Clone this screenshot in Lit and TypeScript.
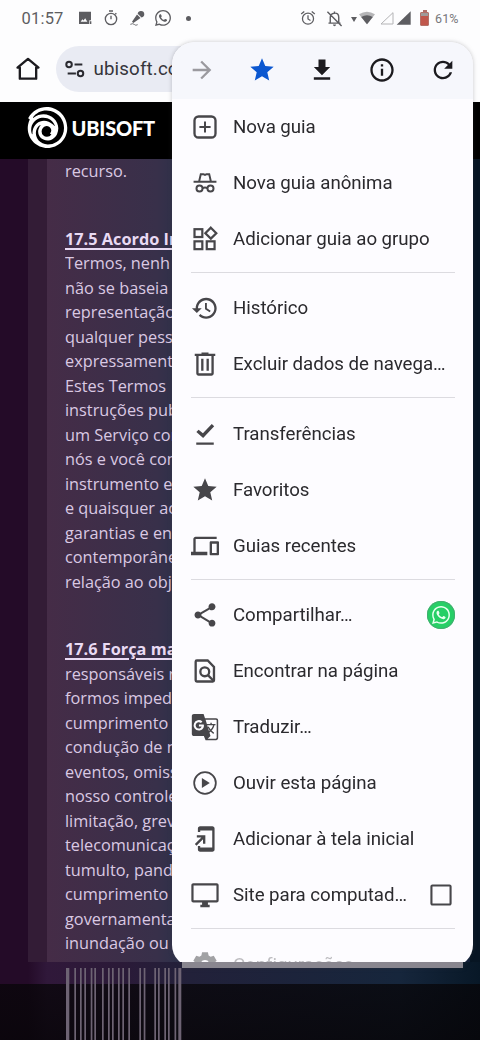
import { LitElement, html, svg, css, nothing } from "lit";
import { customElement, property } from "lit/decorators.js";

const WHATSAPP =
  "M.057 24l1.687-6.163c-1.041-1.804-1.588-3.849-1.587-5.946.003-6.556 5.338-11.891 11.893-11.891 3.181.001 6.167 1.24 8.413 3.488 2.245 2.248 3.481 5.236 3.48 8.414-.003 6.557-5.338 11.892-11.893 11.892-1.99-.001-3.951-.5-5.688-1.448l-6.305 1.654zm6.597-3.807c1.676.995 3.276 1.591 5.392 1.592 5.448 0 9.886-4.434 9.889-9.885.002-5.462-4.415-9.89-9.881-9.892-5.452 0-9.887 4.434-9.889 9.884-.001 2.225.651 3.891 1.746 5.634l-.999 3.648 3.742-.981zm11.387-5.464c-.074-.124-.272-.198-.57-.347-.297-.149-1.758-.868-2.031-.967-.272-.099-.47-.149-.669.149-.198.297-.768.967-.941 1.165-.173.198-.347.223-.644.074-.297-.149-1.255-.462-2.39-1.475-.883-.788-1.48-1.761-1.653-2.059-.173-.297-.018-.458.13-.606.134-.133.297-.347.446-.521.151-.172.2-.296.3-.495.099-.198.05-.372-.025-.521-.075-.148-.669-1.611-.916-2.206-.242-.579-.487-.501-.669-.51l-.57-.01c-.198 0-.52.074-.792.372s-1.04 1.016-1.04 2.479 1.065 2.876 1.213 3.074c.149.198 2.095 3.2 5.076 4.487.709.306 1.263.489 1.694.626.712.226 1.36.194 1.872.118.571-.085 1.758-.719 2.006-1.413.248-.695.248-1.29.173-1.414z";
const STAR = "M12 17.27L18.18 21l-1.64-7.03L22 9.24l-7.19-.61L12 2 9.19 8.63 2 9.24l5.46 4.73L5.82 21z";

const ICONS: Record<string, unknown> = {
  forward: svg`<path d="M12 4l-1.41 1.41L16.17 11H4v2h12.17l-5.58 5.59L12 20l8-8z"/>`,
  star: svg`<path d=${STAR} />`,
  download: svg`<path d="M19 9.5h-4V3H9v6.500H5l7 7 7-7zM5 18.300v2h14v-2H5z"/>`,
  info: svg`<path d="M11 7h2v2h-2zm0 4h2v6h-2zm1-9C6.480 2 2 6.480 2 12s4.480 10 10 10 10-4.480 10-10S17.520 2 12 2zm0 18c-4.410 0-8-3.590-8-8s3.590-8 8-8 8 3.590 8 8-3.590 8-8 8z"/>`,
  refresh: svg`<path d="M17.650 6.350C16.200 4.900 14.210 4 12 4c-4.420 0-7.990 3.580-7.990 8s3.570 8 7.990 8c3.730 0 6.840-2.550 7.730-6h-2.080c-.82 2.330-3.040 4-5.650 4-3.310 0-6-2.690-6-6s2.690-6 6-6c1.660 0 3.140.69 4.220 1.780L13 11h7V4l-2.350 2.350z"/>`,
  newTab: svg`<g fill="none" stroke="currentColor" stroke-width="2"><rect x="3" y="3" width="18" height="18" rx="3.500"/><path d="M12 7.200v9.600M7.200 12h9.600" stroke-width="1.700"/></g>`,
  incognito: svg`<g fill="none" stroke="currentColor" stroke-width="1.700"><path d="M2.200 10.900h19.600M7 10.500l1.400-6.100h2.200l1.400.7 1.400-.7h2.200L17 10.500"/><circle cx="7.300" cy="16.700" r="2.600"/><circle cx="16.700" cy="16.700" r="2.600"/><path d="M9.900 16.500q2.100-1.300 4.200 0"/></g>`,
  group: svg`<g fill="none" stroke="currentColor" stroke-width="1.900"><rect x="3" y="3.600" width="6.700" height="6.700"/><rect x="3" y="14" width="6.700" height="6.700"/><rect x="13.500" y="14" width="6.700" height="6.700"/><path d="M17 2.300l4.700 4.700-4.700 4.700L12.300 7z"/></g>`,
  history: svg`<path d="M13 3c-4.970 0-9 4.030-9 9H.8l4.200 4 4.200-4H6c0-3.870 3.130-7 7-7s7 3.130 7 7-3.130 7-7 7c-1.930 0-3.680-.79-4.940-2.060l-1.420 1.420C8.270 19.990 10.510 21 13 21c4.970 0 9-4.030 9-9s-4.030-9-9-9zm-1 4.500v5.200l4 2.700.9-1.300-3.300-2.200V7.500H12z" transform="translate(0 .3)"/>`,
  trash: svg`<path d="M9 2.200v1H3.200v2h1.300V20c0 1.100.9 2 2 2h11c1.100 0 2-.9 2-2V5.200h1.300v-2H15v-1H9zM6.500 5.200h11V20h-11V5.200zM8.700 7.500v10.200h2V7.500h-2zm4.600 0v10.200h2V7.500h-2z"/>`,
  done: svg`<path d="M4.500 19.300h15v1.900h-15zM19.900 5.300l-2.100-1.900-7.600 8-3.700-3.100-1.900 2 5.800 5.100z"/>`,
  devices: svg`<path d="M4 6h18V4H4c-1.100 0-2 .9-2 2v11H0v3h14v-3H4V6zm19 2h-6c-.55 0-1 .45-1 1v10c0 .55.45 1 1 1h6c.55 0 1-.45 1-1V9c0-.55-.45-1-1-1zm-1 10h-4v-8h4v8z"/>`,
  share: svg`<path d="M18 16.080c-.76 0-1.440.3-1.960.77L8.910 12.700c.05-.23.09-.46.09-.7s-.04-.47-.09-.7l7.050-4.110c.54.5 1.250.81 2.040.81 1.660 0 3-1.340 3-3s-1.340-3-3-3-3 1.340-3 3c0 .24.04.47.09.7L8.040 9.810C7.500 9.310 6.790 9 6 9c-1.660 0-3 1.340-3 3s1.340 3 3 3c.79 0 1.500-.31 2.040-.81l7.120 4.160c-.05.21-.08.43-.08.65 0 1.610 1.310 2.920 2.920 2.920s2.920-1.310 2.920-2.920-1.310-2.920-2.920-2.920z"/>`,
  find: svg`<g fill="none" stroke="currentColor" stroke-width="2"><path d="M5 3h9.300L19.700 8.500V20a1 1 0 0 1-1 1H5a1 1 0 0 1-1-1V4a1 1 0 0 1 1-1z"/><circle cx="11.800" cy="12.700" r="3.800"/><path d="M14.500 15.500l4.800 4.900"/></g>`,
  translate: svg`<path d="M2.500.8h8.300l1.200 3.700h9.500c1 0 1.800.8 1.800 1.800v15.200c0 1-.8 1.800-1.800 1.800h-9l-1.500-3.500H2.500c-1 0-1.800-.8-1.800-1.800V2.600c0-1 .8-1.800 1.800-1.800z"/><path d="M12.500 5.800h8.800q.7 0 .7.700v14.800q0 .7-.7.700h-7l2.400-2.300-4.200-13.900z" fill="#fdfcff"/><path d="M10.900 9.800H6.800v1.700h2.300c-.3 1.100-1.200 1.800-2.400 1.800a2.700 2.700 0 1 1 1.800-4.700l1.300-1.300a4.500 4.500 0 1 0-3.100 7.800c2.800 0 4.400-2 4.400-4.300z" fill="#fdfcff"/><g fill="none" stroke="currentColor" stroke-width="1.200"><path d="M13.300 10h7.700M17.200 8.400V10M19.600 10c-.4 2.700-2 4.700-4.400 6.400M14.600 11.800c1 2.200 2.700 4.100 4.900 5.600"/></g>`,
  play: svg`<circle cx="12" cy="12" r="9.300" fill="none" stroke="currentColor" stroke-width="1.500"/><path d="M9.300 7.700v8.600l6.800-4.300z"/>`,
  addHome: svg`<path d="M7.800 1h10.500c1.100 0 1.900.8 1.900 1.900v18.200c0 1.100-.8 1.900-1.900 1.900H7.800c-1.100 0-1.900-.8-1.900-1.900V18h2v1.200h10.300V4.800H7.900V6h-2V2.900C5.900 1.800 6.700 1 7.800 1z"/><path d="M5 8.700h7.300V16h-2v-3.800l-5.600 5.500-1.400-1.400 5.600-5.600H5z"/>`,
  desktop: svg`<path d="M22 2H2C1 2 .3 2.700.3 3.700v13c0 1 .7 1.700 1.700 1.700h7.500v2H8v2h8v-2h-1.500v-2H22c1 0 1.700-.7 1.700-1.700v-13c0-1-.7-1.700-1.700-1.700zm-.2 14.500H2.200V3.900h19.600v12.600z"/>`,
  checkbox: svg`<path d="M19.300 4.700v14.600H4.700V4.700h14.600m0-1.800H4.700c-1 0-1.800.8-1.800 1.800v14.600c0 1 .8 1.800 1.800 1.800h14.600c1 0 1.800-.8 1.800-1.800V4.700c0-1-.8-1.800-1.800-1.800z"/>`,
  gear: svg`<path d="M9.500 2h5l.6 2.800 1.700 1 2.700-.9L22 9.200l-2.200 1.900v1.900L22 14.900 19.500 19l-2.700-.9-1.700 1-.6 2.900h-5l-.6-2.900-1.700-1-2.700.9L2 14.900 4.200 13v-1.900L2 9.200l2.500-4.300 2.700.9 1.700-1zM12 8.500a3.500 3.500 0 1 0 0 7 3.500 3.500 0 0 0 0-7z"/>`,
  home: svg`<path d="M5 20.300V10.800H3L12 3.300l9 7.500h-2v9.500z" fill="none" stroke="currentColor" stroke-width="2" stroke-linejoin="round"/>`,
  tune: svg`<g fill="none" stroke="currentColor" stroke-width="2.200"><circle cx="5.500" cy="7" r="3"/><path d="M11.500 7H20M4 17h9"/><circle cx="18" cy="17" r="3"/></g>`,
  whatsapp: svg`<path d=${WHATSAPP} />`,
  photo: svg`<path d="M3 2.500h18v13h-2.500V21H3zM5.500 17.500h10l-3.200-5-2.600 3.200-1.600-2z" fill-rule="evenodd"/><path d="M19.500 17h2v4h-2z"/>`,
  timer: svg`<g fill="none" stroke="currentColor" stroke-width="2"><circle cx="12" cy="13.500" r="8.500"/><path d="M9 1.500h6M12 8.500v5.500M18.500 6.500L20 5"/></g>`,
  mic: svg`<path d="M13 5.500a5 5 0 1 1 5.800 5.800zM12 6.800l5.300 5.300L6.500 19.500l-2-2z"/><path d="M2 21.500q4-2 6 .2t5 .3" fill="none" stroke="currentColor" stroke-width="1.300"/>`,
  alarm: svg`<g fill="none" stroke="currentColor" stroke-width="1.900"><circle cx="12" cy="13" r="8.300"/><path d="M12 8v5.500l3.700 2.200M1.800 6l4.600-3.900M22.200 6l-4.600-3.900"/></g>`,
  bellOff: svg`<g fill="none" stroke="currentColor" stroke-width="2"><path d="M6 18V10.500q0-5.500 6-6t6 6V18M3.500 18.500h17M12 2v3M2 2.500L22 22.500"/></g><path d="M9.700 20.500h4.600q-.5 2.300-2.300 2.300t-2.300-2.300z"/>`,
  wifi: svg`<path d="M0 6.500Q12-1.500 24 6.500L12 21.500z" opacity=".45"/><path d="M3.300 10.500Q12 5 20.700 10.500L12 21.500z"/>`,
  signalEmpty: svg`<path d="M3 21L21 4v17z" fill="none" stroke="currentColor" stroke-width="1.500"/>`,
  signal: svg`<path d="M1 22L22 2v20z"/>`,
  ubisoft: svg`<path d="M23.561 11.988C23.301-.304 6.954-4.890.656 6.634c.282.206.661.477.943.672a11.747 11.747 0 00-.976 3.067 11.885 11.885 0 00-.184 2.071C.439 18.818 5.621 24 12.005 24c6.385 0 11.556-5.170 11.556-11.556v-.455zm-20.270 2.060c-.152 1.246-.054 1.636-.054 1.788l-.282.098c-.108-.206-.37-.932-.488-1.908C2.163 10.308 4.700 6.960 8.570 6.330c3.544-.52 6.937 1.680 7.728 4.758l-.282.098c-.087-.087-.228-.336-.77-.878-4.281-4.281-11.002-2.320-11.956 3.740zm11.002 2.081a3.145 3.145 0 01-2.590 1.355 3.150 3.150 0 01-3.155-3.155 3.159 3.159 0 012.927-3.144c1.018-.043 1.972.51 2.416 1.398a2.580 2.580 0 01-.455 2.950c.293.205.575.4.856.595zm6.580.12c-1.669 3.782-5.106 5.766-8.770 5.712-7.034-.347-9.083-8.466-4.380-11.393l.207.206c-.076.108-.358.325-.791 1.182-.51 1.041-.672 2.081-.607 2.732.369 5.670 8.314 6.830 11.045 1.214C21.057 8.217 11.822.401 3.626 6.374l-.184-.184C5.599 2.808 9.816 1.300 13.837 2.309c6.147 1.550 9.453 7.956 7.035 13.940z"/>`,
};

const icon = (name: string, cls = "ic") =>
  html`<svg class=${cls} viewBox="0 0 24 24" fill="currentColor">${ICONS[name]}</svg>`;

type Item = { icon: string; label: string; end?: string; faded?: boolean };

const GROUPS: Item[][] = [
  [
    { icon: "newTab", label: "Nova guia" },
    { icon: "incognito", label: "Nova guia anônima" },
    { icon: "group", label: "Adicionar guia ao grupo" },
  ],
  [
    { icon: "history", label: "Histórico" },
    { icon: "trash", label: "Excluir dados de navega…" },
  ],
  [
    { icon: "done", label: "Transferências" },
    { icon: "star", label: "Favoritos" },
    { icon: "devices", label: "Guias recentes" },
  ],
  [
    { icon: "share", label: "Compartilhar…", end: "whatsapp" },
    { icon: "find", label: "Encontrar na página" },
    { icon: "translate", label: "Traduzir…" },
    { icon: "play", label: "Ouvir esta página" },
    { icon: "addHome", label: "Adicionar à tela inicial" },
    { icon: "desktop", label: "Site para computad…", end: "checkbox" },
  ],
  [{ icon: "gear", label: "Configurações", faded: true }],
];

@customElement("menu-item")
class MenuItem extends LitElement {
  @property({ attribute: false }) item!: Item;
  static styles = css`
    :host { display: block; }
    .row { display: flex; align-items: center; height: 56px; padding: 0 18.500px; color: #47464a; }
    .faded { opacity: 0.5; }
    .faded .label { opacity: 0.6; padding-top: 2px; }
    .ic { width: 28px; height: 28px; flex: none; }
    .label { flex: 1; margin-left: 14.500px; font: 400 18.700px/28px Roboto, sans-serif; letter-spacing: -0.04px; color: #2b2a2e; white-space: nowrap; }
    .badge { display: flex; align-items: center; justify-content: center; width: 28px; height: 28px; border-radius: 50%; background: #26cf66; color: #e9fff0; box-shadow: inset 0 0 0 1px #43ad70; }
    .wa { width: 18px; height: 18px; }
  `;
  render() {
    const { icon: name, label, end, faded } = this.item;
    return html`<div class="row ${faded ? "faded" : ""}">
      ${icon(name)}<span class="label">${label}</span>
      ${end === "whatsapp"
        ? html`<span class="badge">${icon("whatsapp", "wa")}</span>`
        : end
          ? icon(end)
          : nothing}
    </div>`;
  }
}

@customElement("browser-menu")
class BrowserMenu extends LitElement {
  static styles = css`
    :host { display: block; }
    .clip { height: 920px; overflow: hidden; border-radius: 22px 22px 0 0; }
    .panel { height: 925px; overflow: hidden; background: #fdfcff; border-radius: 22px; }
    .tools { display: flex; align-items: center; justify-content: space-between; height: 57px; padding: 0 16.500px 1.500px 16px; background: #f6f7fc; color: #1c1b1f; box-sizing: border-box; }
    .ic { width: 28px; height: 28px; }
    .dim { color: #9b9a9f; }
    .blue { color: #0b57d0; }
    .rule { height: 1px; margin: 5px 18.500px 7.300px; background: #dcdbe0; }
    .fade { height: 6px; margin: 0 10px; background: #89868f; }
  `;
  render() {
    return html`<div class="clip"><div class="panel">
        <div class="tools">
          ${icon("forward", "ic dim")}${icon("star", "ic blue")}${icon("download")}${icon("info")}${icon("refresh")}
        </div>
        ${GROUPS.map(
          (g, i) => html`${i ? html`<div class="rule"></div>` : nothing}
          ${g.map((it) => html`<menu-item .item=${it}></menu-item>`)}`,
        )}
      </div></div>
      <div class="fade"></div>`;
  }
}

const SECTIONS: { title?: string; lines: string[] }[] = [
  { lines: ["recurso."] },
  {
    title: "17.5 Acordo Integral.",
    lines: [
      "Termos, nenh", "não se baseia", "representação", "qualquer pessoa", "expressamente",
      "Estes Termos", "instruções publ", "um Serviço con", "nós e você com", "instrumento e",
      "e quaisquer aco", "garantias e ent", "contemporâne", "relação ao obj",
    ],
  },
  {
    title: "17.6 Força maior.",
    lines: [
      "responsáveis na", "formos impedid", "cumprimento", "condução de n", "eventos, omiss", "nosso controle",
      "limitação, greve", "telecomunicaç", "tumulto, pande", "cumprimento", "governamental", "inundação ou",
    ],
  },
];

/* Barcode strokes: [offset from the left edge, stroke width] */
const BARS = [
  [1, 3.300], [9.300, 1.700], [15, 1.700], [19.300, 1.700], [25.700, 1.700], [29.300, 1.700], [37, 1.700], [43, 1.700], [47, 1.700], [53, 1.700],
  [57.300, 1.700], [63.300, 1.700], [74.300, 1.700], [78.700, 1.700], [89.300, 1.700], [93, 1.700], [99.300, 1.700], [103, 1.700], [109.500, 1.700], [113.300, 3],
];

@customElement("app-root")
class AppRoot extends LitElement {
  static styles = css`
    :host { display: block; position: relative; width: 480px; height: 1040px; overflow: hidden; background: #fdfdfe; }
    .status { display: flex; align-items: center; height: 36px; color: #5d5d61; font-family: Roboto, sans-serif; }
    .clock { width: 41px; margin-left: 21.500px; font-size: 16.500px; letter-spacing: 0.2px; }
    .left { display: flex; align-items: center; gap: 10px; margin-left: 14px; }
    .s { width: 16px; height: 16px; flex: none; }
    .dot { width: 5px; height: 5px; margin-left: 5px; border-radius: 50%; background: #5d5d61; }
    .right { display: flex; align-items: center; margin-left: auto; margin-right: 20px; }
    .caret { width: 0; height: 0; margin: 3px 2px 0 8px; border: 3px solid transparent; border-top: 5px solid #5d5d61; border-bottom: 0; }
    .pale { color: #b4b4b6; margin: 0 1px 0 4px; }
    .bell { margin-left: 10px; width: 17px; height: 17px; }
    .battery { display: flex; flex-direction: column; align-items: center; margin: 0 6px 0 8px; }
    .cap { width: 4px; height: 2px; background: #b0706a; }
    .cell { width: 9px; height: 14px; border-radius: 1px; background: linear-gradient(#9f9a99 0 25%, #c0574c 25% 100%); box-sizing: border-box; border: 1px solid #b47168; }
    .pct { width: 25px; font-size: 12.500px; color: #77777b; letter-spacing: 0.1px; }
    .bar { display: flex; align-items: center; height: 66px; padding-left: 14px; padding-bottom: 1px; box-sizing: border-box; color: #1c1b1f; }
    .home { width: 28px; height: 28px; }
    .pill { display: flex; align-items: center; width: 300px; height: 46px; margin: 0 0 0 14px; padding-left: 7.500px; box-sizing: border-box; border-radius: 23px; background: #e9ebf3; }
    .tune { width: 22px; height: 22px; color: #2a2a30; }
    .url { margin-left: 8px; font: 400 18.700px Roboto, sans-serif; letter-spacing: 0.15px; color: #35353b; }
    .brand { display: flex; align-items: center; height: 57px; padding: 0 0 6px 27px; box-sizing: border-box; background: #000; color: #fff; }
    .swirl { width: 41px; height: 41px; }
    .name { margin-left: 3.500px; font: 900 20px/24px Lato, sans-serif; letter-spacing: -0.2px; }
    .page { display: flex; height: 803px; padding-left: 28px; background: linear-gradient(90deg, #240b28 0 28px, #1b1024 170px, #071523 470px); }
    .gutter { flex: none; width: 18.500px; background: #331c36; }
    .card { flex: 1; padding: 0 0 0 18.500px; background: linear-gradient(90deg, #452c47, #38304a 110px, #2b3049 135px, #12203a 380px); }
    .edge { flex: none; width: 10px; background: #071523; }
    .text { font: 400 16.300px/24.500px "Open Sans", "Noto Sans", sans-serif; color: #dac9e3; white-space: nowrap; overflow: hidden; }
    .section { margin-bottom: 43px; }
    .title { font-weight: 700; color: #e9daf3; text-decoration: underline; text-underline-offset: 3px; text-decoration-thickness: 1.500px; }
    .foot { height: 78px; padding: 6px 0 0 65px; box-sizing: border-box; background: linear-gradient(rgba(0,0,0,0) 0 22px, rgba(7,5,8,0.75) 22px, rgba(7,5,8,0.85)), linear-gradient(90deg, #240b28 0 28px, #30183a 47px, #2b1a38 120px, #22213a 190px, #16263c 400px, #081827); }
    .bars { display: block; width: 120px; height: 72px; }
    .menu { position: absolute; left: 172px; top: 42px; width: 301px; filter: drop-shadow(0 0 2px rgba(60, 60, 70, 0.28)); }
  `;
  render() {
    return html`
      <div class="status">
        <span class="clock">01:57</span>
        <div class="left">
          ${icon("photo", "s")}${icon("timer", "s")}${icon("mic", "s")}${icon("whatsapp", "s")}<i class="dot"></i>
        </div>
        <div class="right">
          ${icon("alarm", "s")}${icon("bellOff", "s bell")}<i class="caret"></i>${icon("wifi", "s")}
          ${icon("signalEmpty", "s pale")}${icon("signal", "s")}
          <div class="battery"><i class="cap"></i><i class="cell"></i></div>
          <span class="pct">61%</span>
        </div>
      </div>
      <div class="bar">
        ${icon("home", "home")}
        <div class="pill">${icon("tune", "tune")}<span class="url">ubisoft.com</span></div>
      </div>
      <div class="brand">${icon("ubisoft", "swirl")}<span class="name">UBISOFT</span></div>
      <div class="page">
        <div class="gutter"></div>
        <div class="card">
          <div class="text">
            ${SECTIONS.map(
              (s) => html`<div class="section">
                ${s.title ? html`<div class="title">${s.title}</div>` : nothing}
                ${s.lines.map((l) => html`<div>${l}</div>`)}
              </div>`,
            )}
          </div>
        </div>
        <div class="edge"></div>
      </div>
      <div class="foot">
        <svg class="bars" viewBox="0 0 120 72">
          ${BARS.map(([x, w]) => svg`<rect x=${x} y="0" width=${w} height="72" fill="#6d6373"/>`)}
        </svg>
      </div>
      <browser-menu class="menu"></browser-menu>
    `;
  }
}
